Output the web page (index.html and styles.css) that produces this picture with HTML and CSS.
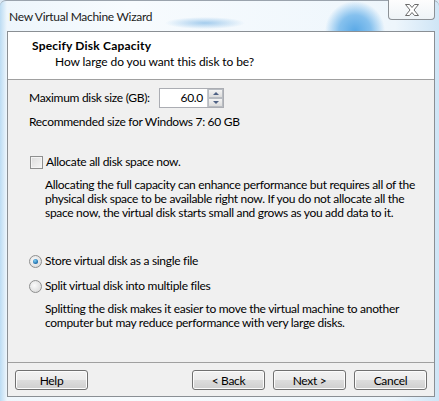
FILE: index.html
```html
<!DOCTYPE html>
<html lang="en">
<head>
  <meta charset="UTF-8">
  <title>New Virtual Machine Wizard</title>
  <link rel="stylesheet" href="styles.css">
</head>
<body>
  <div class="window">
    <div class="titlebar">
      <span class="title">New Virtual Machine Wizard</span>
      <span class="close">
        <svg width="16" height="14" viewBox="0 0 16 14">
          <path d="M1.5 1.5h4l2.5 3 2.5-3h4l-4.5 5.5 4.5 5.5h-4l-2.5-3-2.5 3h-4l4.5-5.5z" fill="#fff" stroke="#6a6a6a" stroke-width="1"/>
        </svg>
      </span>
    </div>
    <div class="client">
      <div class="header">
        <div class="heading">Specify Disk Capacity</div>
        <div class="subheading">How large do you want this disk to be?</div>
      </div>
      <div class="content">
        <div class="size-row">
          <label class="size-label">Maximum disk size (GB):</label>
          <div class="spinbox">
            <span class="spin-value">60.0</span>
            <span class="spin-buttons">
              <span class="spin-btn"><span class="arrow up"></span></span>
              <span class="spin-btn"><span class="arrow down"></span></span>
            </span>
          </div>
        </div>
        <div class="recommended">Recommended size for Windows 7: 60 GB</div>
        <div class="option allocate">
          <span class="checkbox"></span>
          <span>Allocate all disk space now.</span>
        </div>
        <p class="note">Allocating the full capacity can enhance performance but requires all of the<br>physical disk space to be available right now. If you do not allocate all the<br>space now, the virtual disk starts small and grows as you add data to it.</p>
        <div class="option single">
          <span class="radio checked"></span>
          <span>Store virtual disk as a single file</span>
        </div>
        <div class="option split">
          <span class="radio"></span>
          <span>Split virtual disk into multiple files</span>
        </div>
        <p class="note">Splitting the disk makes it easier to move the virtual machine to another<br>computer but may reduce performance with very large disks.</p>
      </div>
      <div class="footer">
        <button class="btn">Help</button>
        <div class="nav">
          <button class="btn">&lt; Back</button>
          <button class="btn">Next &gt;</button>
          <button class="btn">Cancel</button>
        </div>
      </div>
    </div>
  </div>
</body>
</html>
```

FILE: styles.css
```css
body {
  margin: 0;
  padding: 0;
  font-family: Lato, "Noto Sans", sans-serif;
  font-size: 12px;
  letter-spacing: -0.3px;
  color: #000;
  background: #dbe9f5;
  white-space: nowrap;
}
.window {
  width: 439px;
  height: 401px;
  box-sizing: border-box;
  display: flex;
  flex-direction: column;
  padding: 0 4px 4px 7px;
  border-top: 1px solid #9aa3ad;
  border-radius: 6px 6px 0 0;
  background:
    radial-gradient(circle at 355px 30px, #5aa9e6 0, #86c1ee 16px, rgba(200,226,246,0) 30px),
    radial-gradient(ellipse 40px 6px at 205px 22px, rgba(130,185,230,0.7), rgba(255,255,255,0) 100%),
    linear-gradient(90deg, #bcdcf3 0, #eef6fc 7px, #f7fbfe 30%, #eef6fc 90%, #cfe5f6 100%);
}
.titlebar {
  height: 30px;
  display: flex;
  justify-content: space-between;
  align-items: flex-start;
}
.title {
  margin: 8px 0 0 2px;
  line-height: 16px;
  color: #1b1b1b;
}
.close {
  width: 45px;
  height: 19px;
  margin-top: -1px;
  display: flex;
  align-items: center;
  justify-content: center;
  border: 1px solid #8c9196;
  border-top: none;
  border-radius: 0 0 4px 4px;
  background: linear-gradient(#fdfdfd, #eef3f7);
}
.close svg {
  display: block;
}
.client {
  flex: 1;
  display: flex;
  flex-direction: column;
  border: 1px solid #8a8f94;
  background: #f0f0f0;
}
.header {
  height: 48px;
  box-sizing: border-box;
  padding: 7px 0 0 24px;
  background: #fff;
  border-bottom: 1px solid #a0a0a0;
  line-height: 14px;
}
.heading {
  font-weight: bold;
  letter-spacing: 0.2px;
}
.subheading {
  margin: 2px 0 0 23px;
  letter-spacing: -0.1px;
}
.content {
  flex: 1;
  padding: 8px 21px 0 21px;
  line-height: 14px;
}
.size-row {
  display: flex;
  align-items: center;
  height: 20px;
}
.size-label {
  width: 130px;
}
.spinbox {
  width: 63px;
  height: 18px;
  display: flex;
  border: 1px solid #abadb3;
  background: #fff;
}
.spin-value {
  flex: 1;
  text-align: right;
  padding-right: 4px;
  line-height: 18px;
}
.spin-buttons {
  width: 15px;
  display: flex;
  flex-direction: column;
  border-left: 1px solid #c5c8cc;
}
.spin-btn {
  flex: 1;
  display: flex;
  align-items: center;
  justify-content: center;
  border: 1px solid #b8bcc2;
  background: linear-gradient(#f4f4f4, #dcdcdc);
}
.arrow {
  width: 0;
  height: 0;
  border-left: 3px solid transparent;
  border-right: 3px solid transparent;
}
.arrow.up {
  border-bottom: 3px solid #4e6184;
}
.arrow.down {
  border-top: 3px solid #4e6184;
}
.recommended {
  margin-top: 7px;
}
.option {
  display: flex;
  align-items: center;
  gap: 3px;
  height: 14px;
}
.allocate {
  margin-top: 26px;
}
.single {
  margin-top: 34px;
}
.split {
  margin-top: 11px;
}
.checkbox {
  width: 11px;
  height: 11px;
  margin-left: 1px;
  border: 1px solid #8e8f8f;
  background: linear-gradient(135deg, #dcdcdc, #f6f6f6);
  box-shadow: inset 0 0 0 1px #f4f4f4;
}
.radio {
  width: 11px;
  height: 11px;
  border-radius: 50%;
  border: 1px solid #8e8f8f;
  background: radial-gradient(circle at 40% 40%, #fafafa, #d4d4d4);
  display: flex;
  align-items: center;
  justify-content: center;
}
.radio.checked::after {
  content: "";
  width: 5px;
  height: 5px;
  border-radius: 50%;
  background: radial-gradient(circle at 40% 35%, #7fd0f6, #1b6aa8 70%, #0d3f73);
}
.option .radio,
.option .checkbox {
  flex: none;
}
.note {
  margin: 9px 0 0 16px;
}
.footer {
  height: 34px;
  box-sizing: border-box;
  padding: 7px 7px 0 7px;
  border-top: 1px solid #a0a0a0;
  display: flex;
  justify-content: space-between;
  align-items: flex-start;
}
.nav {
  display: flex;
  gap: 8px;
}
.btn {
  width: 73px;
  height: 20px;
  padding: 0;
  font-family: inherit;
  font-size: 12px;
  letter-spacing: inherit;
  color: #000;
  border: 1px solid #707070;
  border-radius: 3px;
  background: linear-gradient(#f2f2f2 0, #ebebeb 50%, #dddddd 50%, #cfcfcf 100%);
  box-shadow: inset 0 0 0 1px #fcfcfc;
}
```
